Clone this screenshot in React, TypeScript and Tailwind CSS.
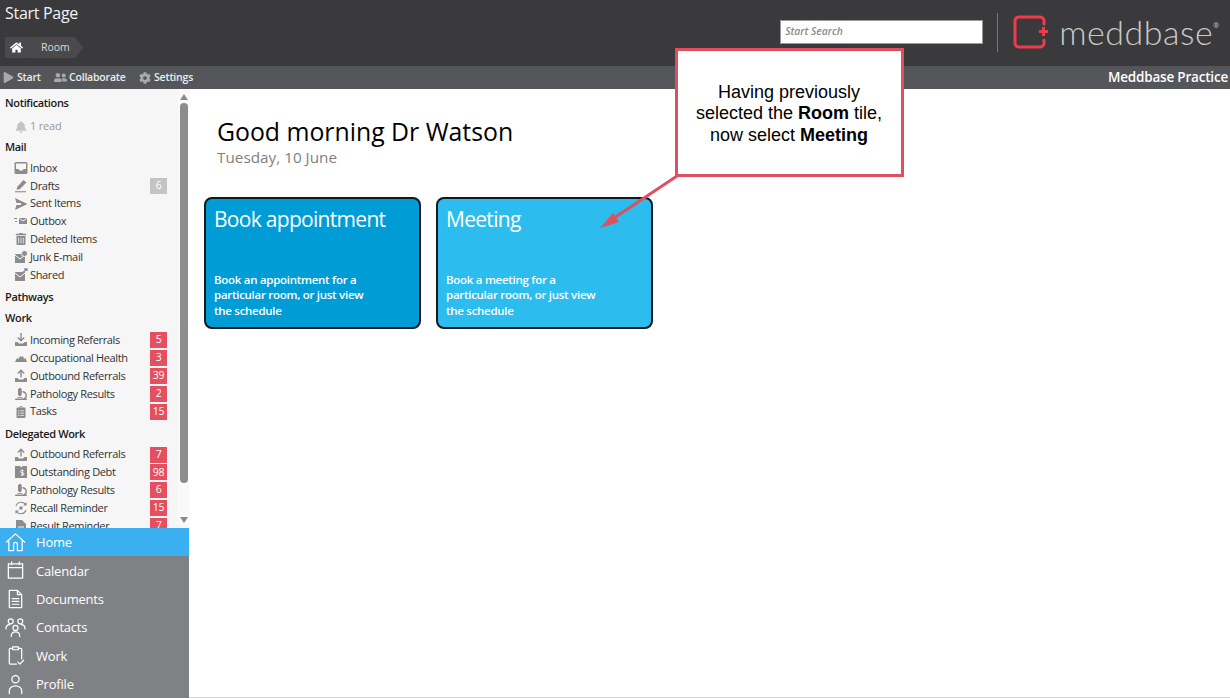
import type { ReactNode } from 'react';
import { FaBell, FaCog, FaHome, FaPlay, FaTrashAlt, FaUserFriends, FaClipboardList, FaMicroscope } from 'react-icons/fa';

const gray = '#8c8c8c';

function Svg({ children }: { children: ReactNode }) {
  return (
    <svg viewBox="0 0 14 14" className="w-[14px] h-[14px]" fill={gray}>
      {children}
    </svg>
  );
}

const InboxIcon = () => (
  <Svg>
    <path d="M2 1h10a1.500 1.500 0 0 1 1.500 1.500v9A1.500 1.500 0 0 1 12 13H2a1.500 1.500 0 0 1-1.500-1.500v-9A1.500 1.500 0 0 1 2 1zm0 1.500V8h2.500l1 1.500h3L9.500 8H12V2.500z" fillRule="evenodd" />
  </Svg>
);
const DraftIcon = () => (
  <Svg>
    <path d="M9.500 1l3 2.500-6.500 6.500-3.500 1 1-3.500z" />
    <path d="M1 12.200h11v1.100H1z" />
  </Svg>
);
const SentIcon = () => (
  <Svg>
    <path d="M1 1l12.500 6L1 13l1.500-5H7V6H2.500z" />
  </Svg>
);
const OutboxIcon = () => (
  <Svg>
    <path d="M5 4h8v6H5zM0 4h3v1H0zM1 7h2v1H1z" />
    <path d="M5.500 4.500L9 7l3.500-2.500" stroke="#f6f6f6" fill="none" />
  </Svg>
);
const JunkIcon = () => (
  <Svg>
    <path d="M1 4h10v9H1z" />
    <path d="M1 5l5 4 5-4" stroke="#f6f6f6" fill="none" />
    <circle cx="10.500" cy="3.500" r="3" stroke="#f6f6f6" />
  </Svg>
);
const SharedIcon = () => (
  <Svg>
    <path d="M1 4h10v9H1z" />
    <path d="M1 5l5 4 5-4" stroke="#f6f6f6" fill="none" />
    <path d="M8 5l4-3M10 1l3 0v2" stroke={gray} strokeWidth="1.500" fill="none" />
  </Svg>
);
const IncomingIcon = () => (
  <Svg>
    <path d="M6.300 0h1.400v6l2-2 1 1L7 8.700 3.300 5l1-1 2 2z" />
    <path d="M1 9h2.500l1.500 1.500h4L10.500 9H13v4H1z" />
  </Svg>
);
const OutgoingIcon = () => (
  <Svg>
    <path d="M6.300 8.500h1.400V3l2 2 1-1L7 .3 3.300 4l1 1 2-2z" />
    <path d="M1 9h2.500l1.500 1.500h4L10.500 9H13v4H1z" />
  </Svg>
);
const HealthIcon = () => (
  <Svg>
    <path d="M1 11l2-4 1.500 1L6 5l1.500 1L9 5l1 3 1.500-1 1.500 4z" />
  </Svg>
);
const DebtIcon = () => (
  <Svg>
    <path d="M1 1h5l1 1.500L9 1l4 0v12H1z" />
    <path d="M9.500 5.500H7.800a1 1 0 0 0 0 2.300h1a1 1 0 0 1 0 2.200H7M8.300 4.500v6.500" stroke="#f6f6f6" fill="none" />
  </Svg>
);
const RecallIcon = () => (
  <Svg>
    <path d="M2 5a5.500 5.500 0 0 1 10-1M12 9a5.500 5.500 0 0 1-10 1" stroke={gray} strokeWidth="1.100" fill="none" />
    <path d="M12.500 1v3.500H9zM1.500 13V9.500H5z" />
    <circle cx="7" cy="7" r="1.800" />
  </Svg>
);
const ResultIcon = () => (
  <Svg>
    <path d="M2 1h6l4 4v8H2z" />
    <path d="M4 8h6M4 10.500h6" stroke="#f6f6f6" fill="none" />
  </Svg>
);
const scaled = (node: ReactNode) => <span className="flex w-[14px] h-[14px] items-center justify-center text-[#8c8c8c]">{node}</span>;

function Title({ children, className = '' }: { children: ReactNode; className?: string }) {
  return <div className={`h-[21px] pl-[5px] flex items-center text-[11px] font-semibold text-[#1a1a1a] tracking-[-0.35px] ${className}`}>{children}</div>;
}

function Row({ icon, label, count, muted }: { icon: ReactNode; label: string; count?: number; muted?: boolean }) {
  return (
    <div className="h-[17.85px] flex items-center pl-[14px] pr-[11px]">
      <span className="w-[16px] shrink-0 flex items-center">{icon}</span>
      <span className="text-[11px] text-[#333] tracking-[-0.35px] whitespace-nowrap">{label}</span>
      {count !== undefined && (
        <span className={`ml-auto w-[17px] h-[16px] flex items-center justify-center text-[10.500px] tracking-[-0.3px] text-white ${muted ? 'bg-[#c4c4c4]' : 'bg-[#e4505f]'}`}>
          {count}
        </span>
      )}
    </div>
  );
}

function NavItem({ icon, label, active }: { icon: ReactNode; label: string; active?: boolean }) {
  return (
    <div className={`h-[28.300px] flex items-center pl-[5px] gap-[10px] text-white ${active ? 'bg-[#3bb0f0]' : ''}`}>
      <span className="w-[21px] flex justify-center">{icon}</span>
      <span className="pt-[2px] text-[13px] font-medium tracking-[-0.2px]">{label}</span>
    </div>
  );
}

function NavSvg({ children }: { children: ReactNode }) {
  return (
    <svg viewBox="0 0 22 22" className="w-[22px] h-[22px]" fill="none" stroke="currentColor" strokeWidth="1.300" strokeLinejoin="round" strokeLinecap="round">
      {children}
    </svg>
  );
}

const HomeIcon = () => (
  <NavSvg>
    <path d="M1.500 11L11 2.500 20.500 11M4 9v11h5v-6.500a2 2 0 0 1 4 0V20h5V9" />
  </NavSvg>
);
const CalendarIcon = () => (
  <NavSvg>
    <path d="M3.500 4.500h15v15h-15zM3.500 8.500h15M7 2.500v3M15 2.500v3" />
  </NavSvg>
);
const DocumentIcon = () => (
  <NavSvg>
    <path d="M4.500 2h8.500l4.500 4.500V20h-13zM13 2v4.500h4.500M7.500 10.500h7M7.500 13.500h7M7.500 16.500h7" />
  </NavSvg>
);
const ContactsIcon = () => (
  <NavSvg>
    <circle cx="6" cy="5" r="2.600" />
    <circle cx="16" cy="5" r="2.600" />
    <circle cx="11" cy="12" r="2.600" />
    <path d="M1 13c0-3 1.500-4.500 4-4.500M21 13c0-3-1.500-4.500-4-4.500M6.500 21c0-3 1.500-5 4.500-5s4.500 2 4.500 5" />
  </NavSvg>
);
const WorkIcon = () => (
  <NavSvg>
    <path d="M12 20.500H5.500a1 1 0 0 1-1-1V5a1 1 0 0 1 1-1h2.500M14 4h2.500a1 1 0 0 1 1 1v10M8 2.500h6v3H8zM13.500 18.500l2 2 4-4" />
  </NavSvg>
);
const ProfileIcon = () => (
  <NavSvg>
    <circle cx="11" cy="6" r="3.800" />
    <path d="M4.500 21v-3a6.500 5 0 0 1 13 0v3" />
  </NavSvg>
);

function Tile({ title, lines, color }: { title: string; lines: string[]; color: string }) {
  return (
    <div className={`w-[217px] h-[132px] rounded-[8px] border-2 border-[#101820] pl-[8px] text-white flex flex-col ${color}`}>
      <div className="text-[21px] tracking-[-0.7px] leading-[28px] mt-[6px]">{title}</div>
      <div className="mt-auto mb-[9px] text-[11.500px] font-semibold leading-[15.300px] tracking-[-0.28px]">
        {lines.map(l => <div key={l}>{l}</div>)}
      </div>
    </div>
  );
}

export default function App() {
  return (
    <div className="relative w-[1230px] h-[698px] overflow-hidden bg-white font-['Open_Sans',sans-serif]">
      {/* Header */}
      <div className="h-[66px] bg-[#3a3a3c] flex justify-between">
        <div className="pl-[5px]">
          <div className="text-[16px] tracking-[-0.3px] text-[#f2f2f2] leading-[20px] mt-[3px]">Start Page</div>
          <div className="flex items-center mt-[14px] h-[21px]">
            <div className="w-[31px] h-[21px] bg-[#4a4a4c] flex items-center pl-[5px] text-white [clip-path:polygon(0_0,72%_0,100%_50%,72%_100%,0_100%)]">
              <FaHome size={13} />
            </div>
            <div className="-ml-[9px] w-[56px] h-[21px] bg-[#4a4a4c] flex items-center pl-[14px] text-[10.500px] text-[#d8d8d8] [clip-path:polygon(0_0,86%_0,100%_50%,86%_100%,0_100%,14%_50%)]">
              Room
            </div>
          </div>
        </div>
        <div className="flex items-center pr-[11px]">
          <div className="w-[203px] h-[24px] bg-white border border-[#999] flex items-center pl-[4px] text-[10.300px] italic font-semibold text-[#8a8a8a] mt-[-2px]">
            Start Search
          </div>
          <div className="w-px h-[39px] bg-[#77787a] ml-[14px] mr-[15px] mt-[-2px]" />
          <svg viewBox="0 0 36 34" className="w-[36px] h-[34px] mt-[-2px]" fill="none" stroke="#ef3b4a" strokeWidth="3">
            <path d="M31 9V6a4 4 0 0 0-4-4H6a4 4 0 0 0-4 4v22a4 4 0 0 0 4 4h21a4 4 0 0 0 4-4v-3" strokeLinecap="round" />
            <path d="M26 16.500h9M30.500 12v9" />
          </svg>
          <div className="ml-[10px] text-[34px] font-light text-[#c9c9c9] leading-none mt-[-2px] tracking-[0.5px] font-['Lato',sans-serif]">meddbase</div>
          <div className="text-[7px] text-[#c9c9c9] -mt-[14px]">®</div>
        </div>
      </div>

      {/* Toolbar */}
      <div className="h-[23px] bg-[#55565a] flex items-center justify-between text-[10.500px] font-semibold text-[#ececec]">
        <div className="flex items-center tracking-[-0.2px]">
          <span className="flex items-center gap-[3px] pl-[3px] w-[54px]"><span className="text-[#a9a9a9]"><FaPlay size={11} /></span>Start</span>
          <span className="flex items-center gap-[2px] w-[85px]"><span className="text-[#a9a9a9]"><FaUserFriends size={13} /></span>Collaborate</span>
          <span className="flex items-center gap-[3px]"><span className="text-[#a9a9a9]"><FaCog size={12} /></span>Settings</span>
        </div>
        <div className="pr-[2px] text-[13.500px] text-white tracking-[-0.2px]">Meddbase Practice</div>
      </div>

      <div className="flex h-[609px] border-b border-[#d4d4d4]">
        {/* Sidebar */}
        <div className="w-[189px] shrink-0 flex flex-col">
          <div className="h-[439px] shrink-0 flex bg-[#f6f6f6] overflow-hidden">
            <div className="w-[178px] shrink-0 pt-[4px]">
              <Title>Notifications</Title>
              <div className="h-[21px] mt-[2px] flex items-center pl-[14px]">
                <span className="w-[16px]">{scaled(<FaBell size={12} className="text-[#c4c4c4]" />)}</span>
                <span className="text-[11px] tracking-[-0.2px] text-[#999]">1 read</span>
              </div>
              <Title>Mail</Title>
              <div className="pt-[1px]">
                <Row icon={<InboxIcon />} label="Inbox" />
                <Row icon={<DraftIcon />} label="Drafts" count={6} muted />
                <Row icon={<SentIcon />} label="Sent Items" />
                <Row icon={<OutboxIcon />} label="Outbox" />
                <Row icon={scaled(<FaTrashAlt size={12} />)} label="Deleted Items" />
                <Row icon={<JunkIcon />} label="Junk E-mail" />
                <Row icon={<SharedIcon />} label="Shared" />
              </div>
              <Title className="mt-[3px]">Pathways</Title>
              <Title>Work</Title>
              <div className="pt-[2.500px]">
                <Row icon={<IncomingIcon />} label="Incoming Referrals" count={5} />
                <Row icon={<HealthIcon />} label="Occupational Health" count={3} />
                <Row icon={<OutgoingIcon />} label="Outbound Referrals" count={39} />
                <Row icon={scaled(<FaMicroscope size={12} />)} label="Pathology Results" count={2} />
                <Row icon={scaled(<FaClipboardList size={12} />)} label="Tasks" count={15} />
              </div>
              <Title className="mt-[3px]">Delegated Work</Title>
              <div className="pt-[1px]">
                <Row icon={<OutgoingIcon />} label="Outbound Referrals" count={7} />
                <Row icon={<DebtIcon />} label="Outstanding Debt" count={98} />
                <Row icon={scaled(<FaMicroscope size={12} />)} label="Pathology Results" count={6} />
                <Row icon={<RecallIcon />} label="Recall Reminder" count={15} />
                <Row icon={<ResultIcon />} label="Result Reminder" count={7} />
              </div>
            </div>
            {/* Scrollbar */}
            <div className="flex-1 flex flex-col items-center pt-[5px] bg-[#f9f9f9]">
              <div className="w-0 h-0 border-x-[4px] border-x-transparent border-b-[6px] border-b-[#8a8a8a]" />
              <div className="w-[8px] h-[380px] mt-[3px] shrink-0 rounded-full bg-[#8c8c8c]" />
              <div className="w-0 h-0 mt-[34px] border-x-[4px] border-x-transparent border-t-[6px] border-t-[#8a8a8a]" />
            </div>
          </div>
          <div className="flex-1 bg-[#808184]">
            <NavItem active icon={<HomeIcon />} label="Home" />
            <NavItem icon={<CalendarIcon />} label="Calendar" />
            <NavItem icon={<DocumentIcon />} label="Documents" />
            <NavItem icon={<ContactsIcon />} label="Contacts" />
            <NavItem icon={<WorkIcon />} label="Work" />
            <NavItem icon={<ProfileIcon />} label="Profile" />
          </div>
        </div>

        {/* Content */}
        <div className="flex-1 pl-[15px] pt-[24px]">
          <h1 className="ml-[13px] text-[24.800px] leading-[36px] text-black">Good morning Dr Watson</h1>
          <div className="ml-[13px] text-[15.300px] leading-[22px] -mt-[3px] text-[#7f7f7f]">Tuesday, 10 June</div>
          <div className="flex gap-[15px] mt-[29px]">
            <Tile title="Book appointment" color="bg-[#009cd6]" lines={['Book an appointment for a', 'particular room, or just view', 'the schedule']} />
            <Tile title="Meeting" color="bg-[#2cbcee]" lines={['Book a meeting for a', 'particular room, or just view', 'the schedule']} />
          </div>
        </div>
      </div>

      {/* Annotation over the page */}
      <svg className="absolute left-[590px] top-[170px] w-[100px] h-[70px]" viewBox="0 0 100 70" fill="#e04f5f">
        <path d="M87 6L18 52" stroke="#e04f5f" strokeWidth="3" />
        <path d="M10 58L23 43 29 52z" />
      </svg>
      <div className="absolute left-[675px] top-[48px] w-[229px] h-[129px] bg-white border-[3px] border-[#e04f5f] pt-[3px] pr-[1px] flex flex-col items-center justify-center font-['Liberation_Sans',sans-serif] text-[18px] leading-[21.500px] text-black">
        <div>Having previously</div>
        <div>selected the <b>Room</b> tile,</div>
        <div>now select <b>Meeting</b></div>
      </div>
    </div>
  );
}
